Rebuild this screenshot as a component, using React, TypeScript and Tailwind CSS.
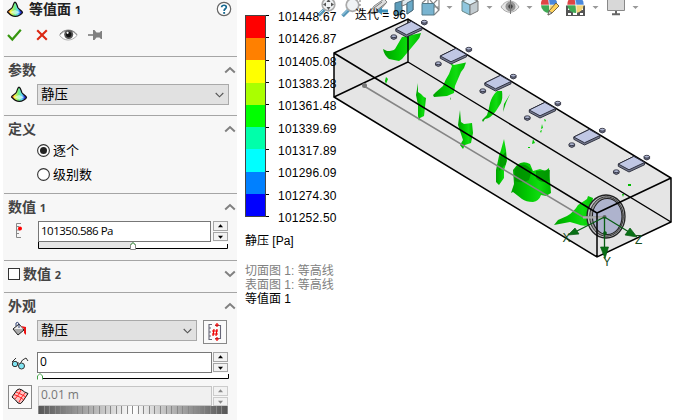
import React from "react";

const Cone = ({ className = "" }: { className?: string }) => (
  <svg className={className} width="18" height="17" viewBox="0 0 18 17">
    <defs>
      <linearGradient id="cone" x1="0" x2="1">
        <stop offset="0" stopColor="#f03030" />
        <stop offset=".2" stopColor="#fff040" />
        <stop offset=".48" stopColor="#70f080" />
        <stop offset=".7" stopColor="#60d8ff" />
        <stop offset=".9" stopColor="#2020d0" />
      </linearGradient>
    </defs>
    <path d="M9 1.2C7.6 1.5 7.4 4 6.4 6.3C5.4 8.3 1.6 9.4 1.5 11C3 12.6 7 15.6 9.5 15.4C12 15.4 16.3 12.8 16.5 11.3C16.2 9.6 12.9 8.5 11.8 6.5C11 4.5 10.8 1.6 9 1.2Z" fill="url(#cone)" stroke="#111" strokeWidth="1.2" />
    <path d="M4 11.2L9 9L14 11.3L9.3 13.6Z" fill="#fff" fillOpacity=".55" />
  </svg>
);

const Chevron = ({ down = false }: { down?: boolean }) => (
  <svg width="12" height="8" viewBox="0 0 12 8">
    <path d={down ? "M1.2 1.5L6 6L10.8 1.5" : "M1.2 6.5L6 2L10.8 6.5"} fill="none" stroke="#808080" strokeWidth="2" />
  </svg>
);

const Section = ({ title, height, children, down, check }: { title: React.ReactNode; height: string; children?: React.ReactNode; down?: boolean; check?: boolean }) => (
  <section className={`${height} shrink-0 border-t border-[#a5a5a5]`}>
    <div className="mb-[2px] flex h-[25px] items-center justify-between pl-[4px] pr-[1px]">
      <div className="flex items-center gap-[3px] text-[14px] font-bold leading-none text-[#444]">
        {check && <span className="h-[12px] w-[12px] border border-[#333] bg-white" />}
        <span>{title}</span>
      </div>
      <Chevron down={down} />
    </div>
    {children}
  </section>
);

const Select = ({ width }: { width: string }) => (
  <div className={`flex h-[21px] ${width} shrink-0 items-center justify-between border border-[#a9a9a9] bg-[#e1e1e1] pl-[3px] pr-[4px] text-[13.5px] leading-none text-black`}>
    <span>静压</span>
    <svg width="9" height="6" viewBox="0 0 9 6"><path d="M.7 1L4.5 4.8L8.3 1" fill="none" stroke="#555" strokeWidth="1.1" /></svg>
  </div>
);

const Spin = ({ dim = false }: { dim?: boolean }) => (
  <div className="flex w-[15px] shrink-0 flex-col gap-[1px]">
    {["M4 5.2L6.5 2.2L9 5.2Z", "M4 2.8L6.5 5.8L9 2.8Z"].map((d) => (
      <div key={d} className={`h-[9.5px] border bg-[#f2f2f2] ${dim ? "border-[#ccc]" : "border-[#a5a5a5]"}`}>
        <svg width="13" height="8" viewBox="0 0 13 8" className="block"><path d={d} fill={dim ? "#888" : "#000"} /></svg>
      </div>
    ))}
  </div>
);

const Header = () => (
  <header className="h-[56px] shrink-0">
    <div className="flex h-[18px] items-center pl-[2px] pr-[5px]">
      <Cone />
      <h1 className="ml-[5px] flex-1 text-[14px] font-bold leading-[18px] text-[#222]">等值面 <span className="text-[11px]">1</span></h1>
      <svg width="16" height="16" viewBox="0 0 16 16">
        <circle cx="8" cy="8" r="6.7" fill="#fff" stroke="#666" strokeWidth="1.2" />
        <path d="M5.6 6.2C5.8 3.6 10.3 3.6 10.3 6.2C10.3 7.8 8.1 7.8 8.1 10" fill="none" stroke="#176991" strokeWidth="1.7" />
        <rect x="7.2" y="11" width="1.9" height="1.8" fill="#176991" />
      </svg>
    </div>
    <div className="flex h-[34px] items-center pl-[3px]">
      <svg width="15" height="14" viewBox="0 0 15 14"><path d="M1 7L5.3 11.5L13.8 1.8" fill="none" stroke="#36960f" strokeWidth="2.2" /></svg>
      <svg className="ml-[14px]" width="12" height="12" viewBox="0 0 12 12"><path d="M1.2 1.2L10.8 10.8M10.8 1.2L1.2 10.8" stroke="#dc2712" strokeWidth="2.1" /></svg>
      <svg className="ml-[11px]" width="19" height="14" viewBox="0 0 19 14">
        <path d="M.8 7.5C4.5 1.5 14 1 18 7.5C13 13.5 5 13.5 .8 7.5Z" fill="#fff" stroke="#888" strokeWidth=".7" />
        <path d="M.8 6.4C4.5 .8 14 .3 18 6.8" fill="none" stroke="#777" />
        <circle cx="9.7" cy="6.5" r="4.5" fill="#555" /><circle cx="9.7" cy="6.5" r="2.7" fill="#111" /><circle cx="8.6" cy="4.8" r="1.1" fill="#fff" />
      </svg>
      <svg className="ml-[10px]" width="15" height="12" viewBox="0 0 15 12"><path d="M0 6H5" stroke="#888" strokeWidth="1.8" /><path d="M5 1H6.5L8.5 3.5H11.5L13 2H14V10H13L11.5 8.5H8.5L6.5 11H5Z" fill="#808080" /></svg>
    </div>
  </header>
);

const bands = [
  ["bg-[#ff0000]", "101448.67"], ["bg-[#ff8000]", "101426.87"], ["bg-[#ffff00]", "101405.08"],
  ["bg-[#aaff00]", "101383.28"], ["bg-[#00ff00]", "101361.48"], ["bg-[#00ffaa]", "101339.69"],
  ["bg-[#00ffff]", "101317.89"], ["bg-[#0080ff]", "101296.09"], ["bg-[#0000ff]", "101274.30"],
];

const Legend = () => (
  <div className="flex flex-col pl-[8px] pt-[15px] text-[12px] leading-none text-black">
    <div className="flex">
      <div className="flex h-[202px] w-[21px] flex-col border border-[#444]">
        {bands.map(([c]) => <div key={c} className={`flex-1 ${c}`} />)}
      </div>
      <div className="flex h-[202px] w-[3px] flex-col justify-between">
        {[...bands, ["", ""]].map((_, i) => <i key={i} className="block h-px bg-black" />)}
      </div>
      <div className="-mt-[4px] ml-[9px] flex h-[213px] flex-col justify-between tracking-[0.22px]">
        {[...bands, ["end", "101252.50"]].map(([, t]) => <span key={t} className="h-[12px]">{t}</span>)}
      </div>
    </div>
    <div className="mt-[11px] h-[30px]">静压 [Pa]</div>
    <div className="h-[14px] text-[#808080]">切面图 1: 等高线</div>
    <div className="h-[14px] text-[#808080]">表面图 1: 等高线</div>
    <div className="h-[14px]">等值面 1</div>
  </div>
);

const Caret = ({ x }: { x: number }) => <path d={`M${x - 3} 6h6l-3 3z`} fill="#999" />;

const Lens = ({ x, y }: { x: number; y: number }) => (
  <g transform={`translate(${x} ${y})`}>
    <path d="M-4 5L-10 11" stroke="#5797b8" strokeWidth="3.6" />
    <path d="M-5 5L-10 10" stroke="#a8d6ed" strokeWidth="1" />
    <circle r="6.3" fill="#f0f3f5" stroke="#aaa" strokeWidth="1.7" />
  </g>
);

const Ball = ({ x }: { x: number }) => (
  <g transform={`translate(${x} 4)`}>
    <path d="M0 1L-1-8A8 8 0 0 0-8 1Z" fill="#de4545" />
    <path d="M0 1L-1-8A8 8 0 0 1 8 1Z" fill="#4a88dc" />
    <path d="M0 1H-8A8 8 0 0 0 1 9Z" fill="#3fa955" />
    <path d="M0 1H8A8 8 0 0 1 1 9Z" fill="#f3d579" />
    <path d="M-8 1H8M-1-8Q1 0 1 9" fill="none" stroke="#fff" strokeOpacity=".6" />
  </g>
);

const Toolbar = () => (
  <g>
    <Lens x={328.5} y={4.5} />
    <path d="M328.5-1L330.5 2H326.5ZM328.5 10L330.5 7H326.5ZM323 4.5L326 2.5V6.5ZM334 4.5L331 2.5V6.5Z" fill="#555" />
    <Lens x={352.5} y={5} />
    <path d="M360 0V10" stroke="#777" strokeDasharray="2 2" />
    <path d="M370 12L374 6L384-1L387 2L380 10L374 14Z" fill="#ddd" stroke="#888" />
    <path d="M374 8L382 2M376 11L386 3" stroke="#777" />
    <path d="M377 11L382 7V9.5H388V12.5H382V15Z" fill="#3d8fb8" />
    <path d="M395 3L402 1V14L395 16Z" fill="#5c9cba" stroke="#476c80" />
    <path d="M402 1L408-2L413 0V10L407 14V4L402 6Z" fill="#dfe8ee" stroke="#777" />
    <path d="M407 3L413 0V10L407 14Z" fill="#6aaac8" stroke="#476c80" />
    <path d="M422 3L428-2H439V10L434 15M428-2V3M434 3L439-2M434 7H439M430 0L439 10" fill="none" stroke="#888" strokeWidth="1.2" />
    <path d="M422 3.5H434V15H422Z" fill="#79b4d0" stroke="#557886" />
    <Caret x={449.5} />
    <path d="M462 1L470-2L478 1L470 5Z" fill="#e2f2fa" stroke="#777" />
    <path d="M462 1L470 5V15L462 11Z" fill="#8fc7df" stroke="#668888" />
    <path d="M478 1L470 5V15L478 11Z" fill="#c2cbd0" stroke="#777" />
    <Caret x={489.5} />
    <path d="M501 7C506-1 514-1 519 7C514 14 506 14 501 7Z" fill="#e6e6e6" stroke="#aaa" />
    <circle cx="510.5" cy="6.5" r="5" fill="#959595" /><circle cx="510.5" cy="6.5" r="2.2" fill="#444" />
    <path d="M510.5 0V14" stroke="#777" />
    <Caret x={529.5} />
    <Ball x={549} />
    <path d="M548 15L549 11L556 3L559 6L552 13Z" fill="#ffd35c" stroke="#6c5b37" strokeWidth=".9" />
    <path d="M548 15L549 11L552 13Z" fill="#ddd" stroke="#555" strokeWidth=".7" />
    <path d="M566 5.5H585V16H566Z" fill="#555" />
    <path d="M568 7H571V10H568ZM573 12H577V15H573ZM579 7H583V10H579ZM568 13H571V15H568ZM580 13H583V15H580Z" fill="#fff" />
    <Ball x={575.5} />
    <Caret x={595.5} />
    <path d="M607.5-2H624.5V10.5H607.5Z" fill="#d8d8d8" stroke="#888" />
    <path d="M616 11V14M612 14.2H620" stroke="#666" strokeWidth="2" />
    <Caret x={635.5} />
  </g>
);

const blobs = [
  "M402 37L421 33Q420 38 417 41L402 59L399 61L389 59Q384 55 383 49L387 51Q393 51 395 49Z",
  "M450 63L454 65L466 62.5L464 68L461 72L458 79L455 86L454 93L447 96L434 97L433 95L436 92L443 86L445.5 80L449 74L452 66Z",
  "M418 83L418 92L421 94L424 97L426 98L424 116L420 118L419 121L418 116L418 105L416 95Z",
  "M386 77L388 79L386 84L385 81Z",
  "M497 91L502 91Q503 98 501 103L496 111Q491 118 485 119L483 122L482 120L487 115Q489 109 490 103Q492 96 497 91Z",
  "M460 110L461 122L464 124L472 123L473 133L471 143L465 145L463 149L460 145L463 140L461 134L458 125Z",
  "M504 139L506 150L507 161L504 170L504 178L499 185L496 182L496 170L499 156L501 150Z",
  "M513 170L517 165Q523 160 530 164L533 171L540 169L545 171L549 168L551 193L546 196L541 195Q539 201 533 202Q526 202 522 199L513 192L511 193L514 184Z",
  "M588 196L593 198Q591 205 595 223Q585 228 577 224L570 222L554 225L558 220L567 216Q574 212 578 205L587 199Z",
  "M510 94L506 103L503 112L504 104Z",
  "M628 184L631 184L631 186L628 186ZM622 194L624 194L623 197ZM544 119L546 120L545 122ZM542 124L543 128L541 129ZM540 131L542 130L541 133ZM533 139L535 143L532 144ZM528 147H530V148H528ZM450 97L451 100L450 99Z",
];

const Model = () => (
  <g>
    <path d="M334 53L408 19L671 178V222L597 257L334 97Z" fill="#e5e5e5" />
    <g fill="url(#iso)">{blobs.map((d) => <path key={d} d={d} />)}</g>
    <path d="M515 169Q523 160 532 170L529 180Q522 184 515 181ZM536 171L550 170L549 181Q541 184 536 178ZM500 157L506 152V164L499 171Z" fill="#008f00" fillOpacity=".8" />
    <path d="M408 19V62L334 97M408 62L671 222" fill="none" stroke="#000" strokeWidth="1.4" />
    <ellipse cx="606" cy="216.5" rx="19" ry="21.5" fill="#bfc0c4" stroke="#222" strokeWidth="1.3" />
    <ellipse cx="606.5" cy="216.5" rx="16.8" ry="19.7" fill="#999" stroke="#333" />
    <ellipse cx="607.2" cy="216.5" rx="14.8" ry="18" fill="#aeb3cd" stroke="#222" strokeWidth="1.1" />
    <path d="M364 86L583 217H605" fill="none" stroke="#858585" strokeWidth="1.6" />
    <path d="M583 217.5H604" stroke="#aaa" strokeWidth="2.2" />
    <circle cx="364.5" cy="85.5" r="2.5" fill="#777" /><circle cx="604.5" cy="217" r="2" fill="#666" />
    <path d="M334 53L408 19L671 178V222L597 257L334 97ZM334 53L597 213V257M597 213L671 178" fill="none" stroke="#000" strokeWidth="1.5" />
    {[0, 1, 2, 3, 4, 5].map((i) => (
      <g key={i} transform={`translate(${409 + i * 44.5} ${29 + i * 27})`} stroke="#242633" strokeWidth=".9" strokeLinejoin="round">
        <path d="M-13.2 0L2.3-7.6L13-1.5V.8L-2.5 8L-13.2 2.3Z" fill="#777b90" />
        <path d="M-13.2 0L2.3-7.6L13-1.5L-2.5 5.8Z" fill="#c0c7e4" />
        {[[15.3, -6.3], [-15.2, 8.2]].map(([x, y]) => <g key={x} strokeWidth=".8"><path d={`M${x - 2.8} ${y - 1}v2q2.8 2.6 5.6 0v-2z`} fill="#777b90" /><ellipse cx={x} cy={y - 1} rx="2.8" ry="1.4" fill="#aeb5d0" /></g>)}
      </g>
    ))}
    <g stroke="#075c13" fill="#087015" strokeWidth="1.3">
      <path d="M604.5 217L575 232M604.5 217V249M604.5 217L629 232" />
      <path d="M568 235L575 228L579 234ZM600.5 247H608.5L605 258.5ZM637 237L625 235L630 228Z" strokeWidth=".7" />
      <circle cx="605" cy="233" r="1.2" />
    </g>
    <g fill="#164c1b" fontSize="12"><text x="562.5" y="241.5">X</text><text x="603" y="265.5">Y</text><text x="635" y="244">Z</text></g>
  </g>
);

const Viewport = () => (
  <main className="relative h-full w-[443px] bg-white font-['Liberation_Sans','Noto_Sans_CJK_SC',sans-serif]">
    <svg className="absolute inset-0" width="443" height="420" viewBox="237 0 443 420">
      <defs><linearGradient id="iso"><stop stopColor="#00a000" /><stop offset=".4" stopColor="#00c900" /><stop offset=".7" stopColor="#10dc10" /><stop offset="1" stopColor="#00ba00" /></linearGradient></defs>
      <Model />
      <Toolbar />
      <text x="355" y="18.5" fontSize="12" textLength="51">迭代 = 96</text>
    </svg>
    <div className="relative"><Legend /></div>
  </main>
);

export default function App() {
  return (
    <div className="flex h-[420px] w-[680px] overflow-hidden bg-white">
      <aside className="flex h-full w-[237px] flex-col border-l-[3px] border-white bg-[#f7f7f7] pl-[1px] font-['Open_Sans','Noto_Sans_CJK_SC',sans-serif]">
        <Header />
        <Section title="参数" height="h-[59px]">
          <div className="flex items-center pl-[6px]"><Cone className="mr-[9px]" /><Select width="w-[192px]" /></div>
        </Section>
        <Section title="定义" height="h-[78px]">
          <div className="-mt-[5px] flex flex-col pl-[33px] text-[13px] leading-none text-black">
            {["逐个", "级别数"].map((t, i) => (
              <label key={t} className="flex h-[24px] items-center gap-[3px]">
                <svg width="13" height="13" viewBox="0 0 13 13"><circle cx="6.5" cy="6.5" r="5.9" fill="#fff" stroke="#333" strokeWidth="1.1" />{i === 0 && <circle cx="6.5" cy="6.5" r="3.5" fill="#222" />}</svg>
                {t}
              </label>
            ))}
          </div>
        </Section>
        <Section title={<>数值 <span className="text-[11px]">1</span></>} height="h-[67px]">
          <div className="flex pl-[11px]">
            <svg width="8" height="17" viewBox="0 0 8 17" className="mt-[1px]"><path d="M6 1.5H1.5V15.5H6M2 4.5H4M2 8H5M2 11.5H4" fill="none" stroke="#888" /><circle cx="5" cy="6.5" r="2" fill="#f00" /></svg>
            <div className="ml-[15px]">
              <div className="flex gap-[2px]">
                <div className="h-[21px] w-[173px] border border-[#777] bg-white pl-[2px] text-[11.5px] leading-[18px] tracking-[-0.5px] text-black">101350.586 Pa</div>
                <Spin />
              </div>
              <svg width="190" height="8" viewBox="0 0 190 8" className="block"><rect width="95" height="6" fill="#e5e5e5" /><rect x="95" width="95" height="6" fill="#fff" /><path d="M.5 0V6.5H189.5V2" fill="none" stroke="#000" /><path d="M92.5 7.5V3L95 .5L97.5 3V7.5Z" fill="#fff" stroke="#888" /><path d="M92.5 3L95 .5L97.5 3" fill="none" stroke="#43a047" /></svg>
            </div>
          </div>
        </Section>
        <Section title={<>数值 <span className="text-[11px]">2</span></>} height="h-[32px]" down check />
        <Section title="外观" height="h-[128px]">
          <div className="flex h-[32px] items-start pl-[7px]">
            <svg className="mt-[1px]" width="18" height="18" viewBox="0 0 18 18"><path d="M2 8L8 3L13 9L7 14Z" fill="#aaa" stroke="#222" /><path d="M3 8L8 4L12 8Z" fill="#eee" /><path d="M5 5V2Q7 0 8 3V7" fill="none" stroke="#334477" /><path d="M10 5L15 6V14L13 12V8Z" fill="#ee1111" /></svg>
            <div className="ml-[8px]"><Select width="w-[160px]" /></div>
            <div className="ml-[6px] flex h-[24px] w-[24px] items-center justify-center border border-[#888] bg-[#fafafa]">
              <svg width="18" height="20" viewBox="0 0 18 20"><path d="M6 2.5H3V17.5H6M3 6H5M3 10H5M3 14H5M9 3.5H14.5V16.5H9" fill="none" stroke="#666677" strokeWidth="1.1" /><path d="M8 7L7 14M11 7L10 14M6 9H12M6 12H12M11 1V5M9 3H13M11 15V19M9 17H13" stroke="#e00" strokeWidth="1.2" /></svg>
            </div>
          </div>
          <div className="flex h-[33px] items-start pl-[7px]">
            <svg className="mt-[4px]" width="18" height="14" viewBox="0 0 18 14"><g stroke="#333"><path d="M1 6L5 2M9 8Q11 3 15 2L17 5M6 7H8" fill="none" /><circle cx="4" cy="8" r="2.7" fill="#80e4f2" /><circle cx="10.5" cy="10" r="3" fill="#80e4f2" /></g></svg>
            <div className="ml-[8px]">
              <div className="flex gap-[1px]"><div className="h-[21px] w-[175px] border border-[#777] bg-white pl-[2px] text-[12px] leading-[17px] text-black">0</div><Spin /></div>
              <svg width="192" height="8" viewBox="0 0 192 8" className="block"><rect width="191" height="6" fill="#fff" /><path d="M4 5.5H191.5V1" fill="none" stroke="#000" /><path d="M.5 6.5V3L3 .5L5.5 3V6.5" fill="#fff" stroke="#43a047" /></svg>
            </div>
          </div>
          <div className="flex items-start pl-[4px]">
            <div className="flex h-[24px] w-[24px] items-center justify-center border border-[#888] bg-[#fafafa]">
              <svg width="20" height="20" viewBox="0 0 20 20"><path d="M2 10L7 3Q9 1 12 3Q14 5 18 6.5L13 14Q11 18 8 16Q6 13 2 10Z" fill="#ffc4c4" stroke="#111" /><path d="M4 7.5Q9 9 14 13M6 5Q11 7 16 10M5 12Q9 8 11 3M9 15Q12 9 15 6" fill="none" stroke="#ff2222" /></svg>
            </div>
            <div className="ml-[6px] mt-[1px]">
              <div className="flex gap-[1px]"><div className="h-[20px] w-[174px] border border-[#c5c5c5] bg-[#f0f0f0] pl-[2px] text-[12px] leading-[15px] text-[#777]">0.01 m</div><Spin dim /></div>
              <div className="flex h-[8px] w-[190px] justify-between bg-gradient-to-r from-[#555] via-white to-[#555]">
                {Array.from({ length: 35 }, (_, i) => <i key={i} className="block h-full w-px bg-[#888]" />)}
              </div>
            </div>
          </div>
        </Section>
      </aside>
      <Viewport />
    </div>
  );
}
